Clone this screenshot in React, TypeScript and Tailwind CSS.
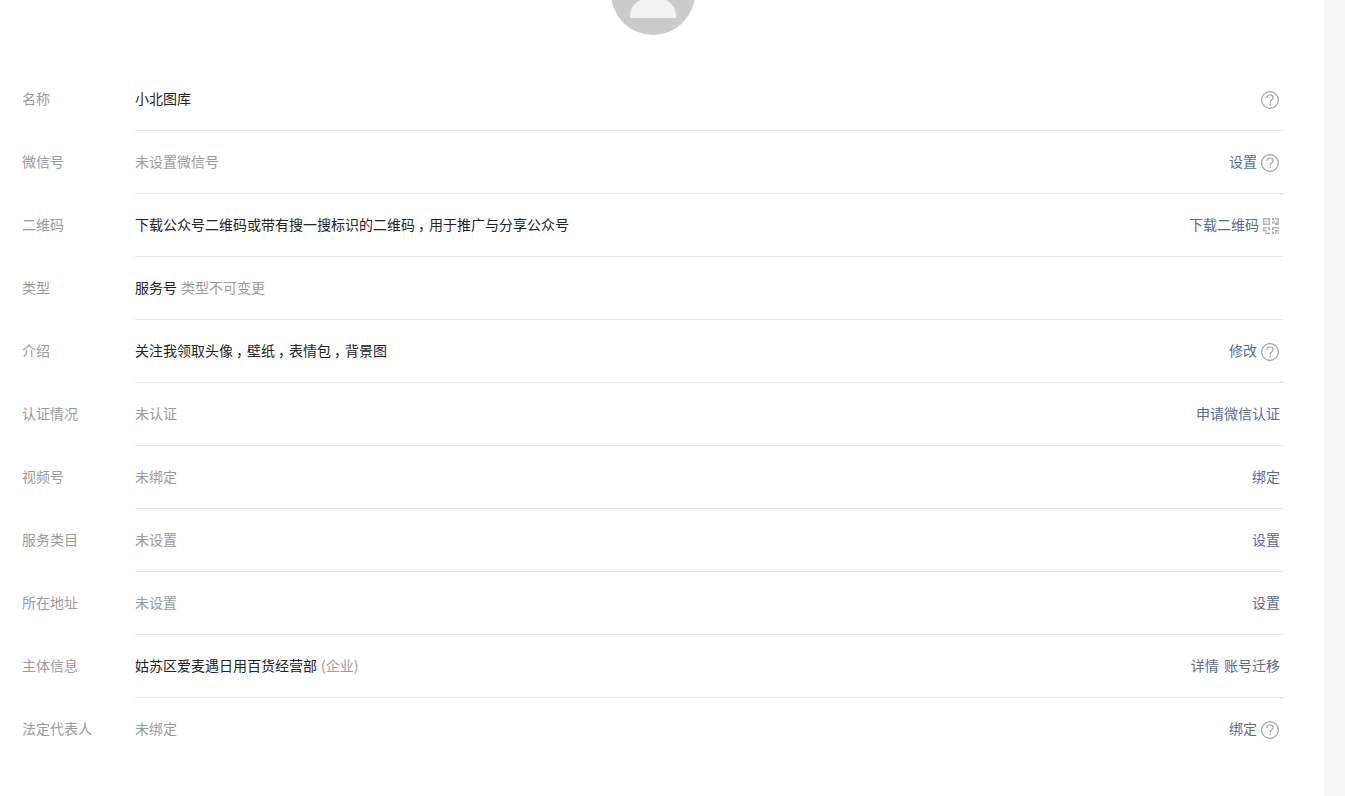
const rows = [
  { label: "名称", value: ["小北图库"], help: true },
  { label: "微信号", value: ["未设置微信号"], muted: true, action: "设置", help: true },
  { label: "二维码", value: ["下载公众号二维码或带有搜一搜标识的二维码", "用于推广与分享公众号"], action: "下载二维码", qr: true },
  { label: "类型", value: ["服务号"], note: "类型不可变更" },
  { label: "介绍", value: ["关注我领取头像", "壁纸", "表情包", "背景图"], action: "修改", help: true },
  { label: "认证情况", value: ["未认证"], muted: true, action: "申请微信认证" },
  { label: "视频号", value: ["未绑定"], muted: true, action: "绑定" },
  { label: "服务类目", value: ["未设置"], muted: true, action: "设置" },
  { label: "所在地址", value: ["未设置"], muted: true, action: "设置" },
  { label: "主体信息", value: ["姑苏区爱麦遇日用百货经营部"], note: "(企业)", action: "详情 账号迁移" },
  { label: "法定代表人", value: ["未绑定"], muted: true, action: "绑定", help: true },
];

function HelpIcon() {
  return (
    <svg width="18" height="18" viewBox="0 0 18 18" className="ml-[4px] mr-px mt-[4px] shrink-0">
      <circle cx="9" cy="9" r="8.4" fill="none" stroke="#a0a0a0" strokeWidth="1.2" />
      <path d="M5.9 7C6 5.100 7.300 4 9 4c1.800 0 3.100 1.100 3.100 2.700 0 1.200-.7 1.800-1.600 2.400-.9.600-1.200 1.100-1.200 2.100v.5" fill="none" stroke="#a0a0a0" strokeWidth="1.200" />
      <rect x="8.500" y="12.800" width="1.400" height="1.500" fill="#a0a0a0" />
    </svg>
  );
}

function QrIcon() {
  return (
    <svg width="16" height="16" viewBox="0 0 16 16" className="ml-[4px] mr-px mt-[4px] shrink-0" fill="#b4b4b4">
      <path d="M0 0h7v7H0zM1.500 1.500v4h4v-4zM2.700 2.700h1.600v1.600H2.700z" fillRule="evenodd" />
      <path d="M9 0h2v2H9zM12 0h4v3h-1.500V1.500H12zM9 3.500h3V5h1.500V3.500H16V7h-4V5.500H9z" />
      <path d="M0 9h4v1.500H1.500V12H4v1.500H0zM5 9h2v3H5zM2 14.500h5V16H2z" />
      <path d="M9 9h7v1.500H10.500V12H9zM12 12h4v1.500h-2.500V16H12zM9 13.500h2V16H9zM14.500 14.500H16V16h-1.500z" />
    </svg>
  );
}

export default function App() {
  return (
    <div className="h-[796px] overflow-hidden bg-[#f6f7f9] font-['Microsoft_YaHei','Noto_Sans_CJK_SC',sans-serif] text-sm">
      <div className="flex h-full w-[1324px] flex-col bg-white pl-[22px] pr-10">
        <div className="ml-[589px] mt-[-49px] flex h-[84px] w-[84px] shrink-0 items-start justify-center overflow-hidden rounded-full bg-[#cbcbcb]">
          <div className="mt-[46px] h-[21px] w-[46px] rounded-tl-[23px_18px] rounded-tr-[23px_18px] bg-[#f2f2f2]" />
        </div>
        <div className="mt-[33px]">
          {rows.map((row, i) => (
            <div key={row.label} className="flex h-[63px] items-start">
              <div className="w-[113px] shrink-0 pt-[20px] leading-5 text-[#9a9a9a]">{row.label}</div>
              <div className={`flex h-[63px] flex-1 items-start justify-between pr-1 pt-[20px] leading-5 ${i < rows.length - 1 ? "border-b border-[#e7e7eb]" : ""}`}>
                <div className={row.muted ? "text-[#9a9a9a]" : "text-[#222222]"}>
                  {row.value.map((part, j) => (
                    <span key={part}>
                      {j > 0 && <span className="pl-[3px] pr-[4px] [font-feature-settings:'halt']">，</span>}
                      {part}
                    </span>
                  ))}
                  {row.note && <span className="ml-1 text-[#9a9a9a]">{row.note}</span>}
                </div>
                <div className="flex h-5 items-center text-[#576b95]">
                  {row.action && <span className="[word-spacing:2px]">{row.action}</span>}
                  {row.help && <HelpIcon />}
                  {row.qr && <QrIcon />}
                </div>
              </div>
            </div>
          ))}
        </div>
      </div>
    </div>
  );
}
